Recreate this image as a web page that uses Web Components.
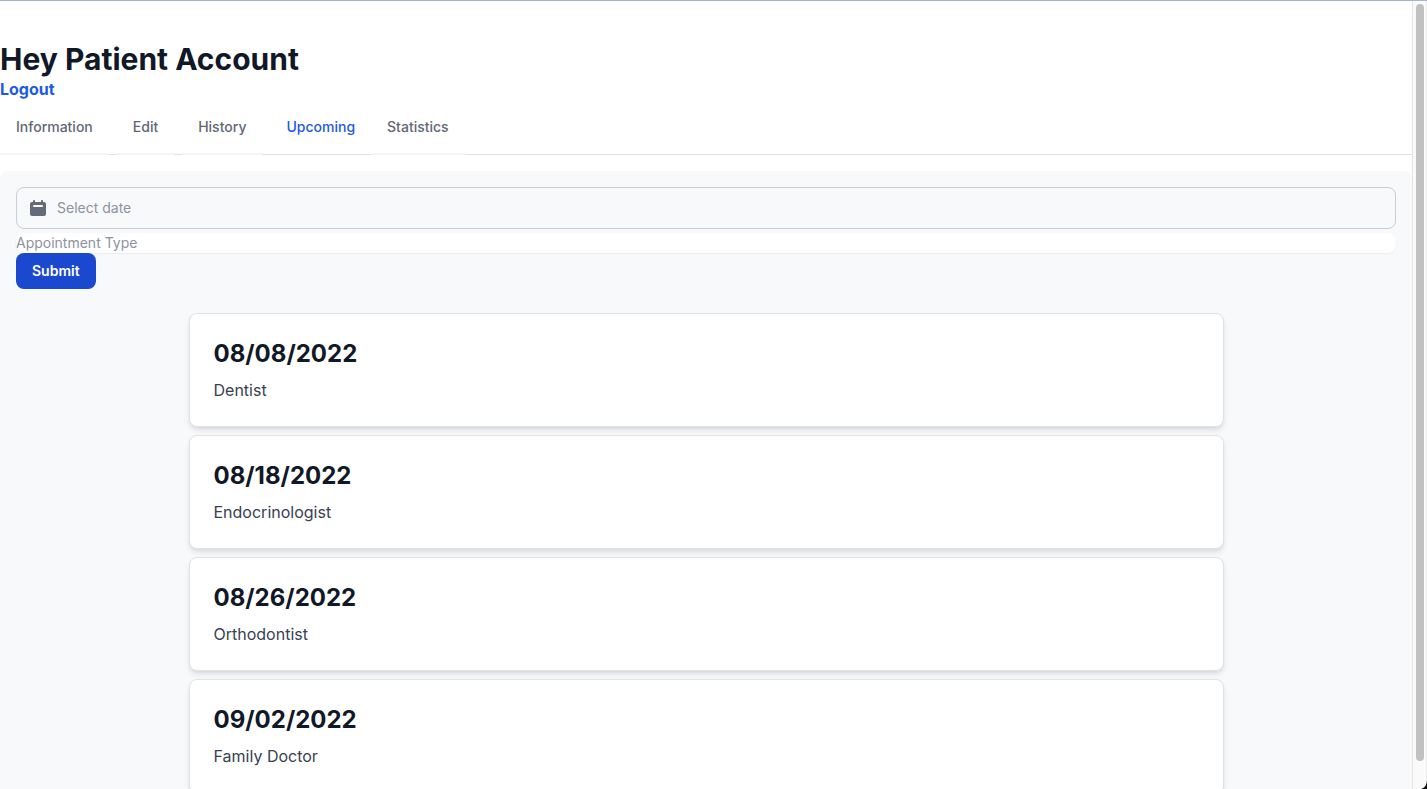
<!DOCTYPE html>
<html lang="en">
<head>
<meta charset="utf-8">
<title>Patient Account</title>
<style>
html, body { margin: 0; height: 100%; overflow: hidden; }
body { font-family: Inter, "Liberation Sans", sans-serif; font-size: 16px; line-height: 24px; color: #111827; background: #fff; }
</style>
</head>
<body>
<patient-app>
  <account-header name="Patient Account"></account-header>
  <tab-bar>
    <tab-item>Information</tab-item>
    <tab-item>Edit</tab-item>
    <tab-item>History</tab-item>
    <tab-item active>Upcoming</tab-item>
    <tab-item>Statistics</tab-item>
  </tab-bar>
  <tab-panel>
    <appointment-form></appointment-form>
    <appointment-list>
      <appointment-card date="08/08/2022">Dentist</appointment-card>
      <appointment-card date="08/18/2022">Endocrinologist</appointment-card>
      <appointment-card date="08/26/2022">Orthodontist</appointment-card>
      <appointment-card date="09/02/2022">Family Doctor</appointment-card>
    </appointment-list>
  </tab-panel>
</patient-app>
<script>
function define(name, html, setup) {
  const template = document.createElement('template');
  template.innerHTML = html;
  customElements.define(name, class extends HTMLElement {
    constructor() {
      super();
      this.attachShadow({ mode: 'open' }).append(template.content.cloneNode(true));
    }
    connectedCallback() { if (setup) setup(this, this.shadowRoot); }
  });
}

define('scroll-rail', `
<style>
:host { display: flex; flex-direction: column; box-sizing: border-box; width: 15px; height: 100%; padding: 3px 3px 28px; border-left: 1px solid #e3e4e4; border-right: 1px solid #ededed; background: #fafafa; position: relative; }
.thumb { flex: 1; width: 8px; border-radius: 4px; background: #c1c1c1; }
.corner { position: absolute; right: -1px; bottom: 0; width: 6px; height: 9px; fill: #111; }
</style>
<div class="thumb"></div>
<svg class="corner" viewBox="0 0 6 9" aria-hidden="true"><path d="M6 0V9H0Q6 7 6 0Z"/></svg>`);

define('patient-app', `
<style>
:host { display: grid; grid-template-columns: minmax(0, 1fr) auto; box-sizing: border-box; height: 100vh; border-top: 1px solid #a9b5c1; overflow: hidden; }
main { min-height: 0; overflow: hidden; padding-top: 40px; }
</style>
<main><slot></slot></main>
<scroll-rail></scroll-rail>`);

define('account-header', `
<style>
:host { display: block; }
h1 { margin: 0; font-size: 30px; line-height: 36px; font-weight: 700; }
a { display: block; width: fit-content; color: #1c5ae0; font-weight: 700; text-decoration: none; }
</style>
<h1>Hey <span></span></h1>
<a href="#logout">Logout</a>`,
(el, root) => { root.querySelector('span').textContent = el.getAttribute('name'); });

define('tab-bar', `
<style>
:host { display: block; margin-bottom: 16px; border-bottom: 1px solid #dfe1e5; }
nav { display: flex; margin-bottom: -1px; }
::slotted(tab-item) { margin-right: 8px; }
::slotted(tab-item[active]) { margin-right: 0; }
</style>
<nav><slot></slot></nav>`);

define('tab-item', `
<style>
:host { display: block; }
button { display: block; margin: 0; padding: 16px; border: 0; border-bottom: 2px solid #f3f4f6; background: none; font: 500 14px/20px Inter, "Liberation Sans", sans-serif; color: #5f6775; cursor: pointer; }
:host([active]) button { color: #1c5ae0; border-color: transparent; }
</style>
<button type="button"><slot></slot></button>`);

define('tab-panel', `
<style>
:host { display: block; padding: 16px; border-radius: 8px; background: #f8f9fb; }
</style>
<slot></slot>`);

define('appointment-form', `
<style>
:host { display: block; }
form { display: flex; flex-direction: column; align-items: stretch; margin: 0; }
input, select, button { box-sizing: border-box; margin: 0; font: 400 14px/20px Inter, "Liberation Sans", sans-serif; }
.date { display: flex; align-items: center; gap: 9px; padding: 10px 11px; border: 1px solid #c9cdd4; border-radius: 8px; margin-bottom: 4px; }
.date svg { width: 20px; height: 20px; fill: #646b79; flex: none; }
input { flex: 1; min-width: 0; height: 20px; padding: 0; border: 0; background: none; outline: 0; color: #111827; }
input::placeholder { color: #8d93a0; opacity: 1; }
select { appearance: none; width: 100%; height: 20px; padding: 0; border: 0; border-radius: 8px; background: #fff; color: #8d93a0; box-shadow: 0 1px 2px rgba(0,0,0,.06); }
button { align-self: flex-start; padding: 8px 16px; border: 0; border-radius: 8px; background: #1a49d0; color: #fff; font-weight: 600; }
</style>
<form>
  <label class="date">
    <svg viewBox="0 0 20 20" aria-hidden="true"><path fill-rule="evenodd" clip-rule="evenodd" d="M6 2a1 1 0 00-1 1v1H4a2 2 0 00-2 2v10a2 2 0 002 2h12a2 2 0 002-2V6a2 2 0 00-2-2h-1V3a1 1 0 10-2 0v1H7V3a1 1 0 00-1-1zm0 5a1 1 0 000 2h8a1 1 0 100-2H6z"/></svg>
    <input type="text" placeholder="Select date" aria-label="Select date">
  </label>
  <select aria-label="Appointment Type"><option>Appointment Type</option></select>
  <button type="submit">Submit</button>
</form>`);

define('appointment-list', `
<style>
:host { display: flex; flex-direction: column; gap: 8px; width: 75%; margin: 24px auto 0; }
</style>
<slot></slot>`);

define('appointment-card', `
<style>
:host { display: block; padding: 24px; border: 1px solid #dfe2e6; border-radius: 8px; background: #fff; box-shadow: 0 4px 6px -1px rgba(0,0,0,.1), 0 2px 4px -1px rgba(0,0,0,.06); }
h2 { margin: 0 0 8px; font-size: 24px; line-height: 32px; font-weight: 700; }
p { margin: 0; color: #374151; }
</style>
<h2></h2>
<p><slot></slot></p>`,
(el, root) => { root.querySelector('h2').textContent = el.getAttribute('date'); });
</script>
</body>
</html>
